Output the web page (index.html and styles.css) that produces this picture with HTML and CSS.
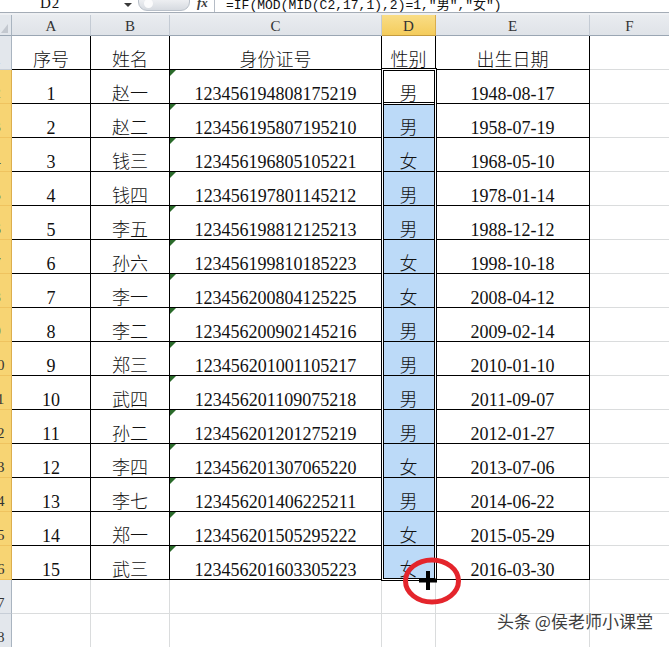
FILE: index.html
```html
<!DOCTYPE html>
<html lang="zh-CN">
<head>
<meta charset="utf-8">
<title>身份证号提取性别</title>
<link rel="stylesheet" href="styles.css">
</head>
<body>
<div class="app">
  <div class="fbar">
    <div class="namebox"><span class="ref">D2</span></div>
    <div class="drop"></div>
    <div class="pill"></div>
    <div class="fx">fx</div>
    <div class="formula">=IF(MOD(MID(C2,17,1),2)=1,"男","女")</div>
  </div>
  <div class="gap"></div>
  <div class="sheet">
    <div class="corner"></div>
    <div class="ch">A</div>
    <div class="ch">B</div>
    <div class="ch">C</div>
    <div class="ch sel">D</div>
    <div class="ch">E</div>
    <div class="ch">F</div>

    <div class="rh"><span>1</span></div>
    <div class="c t">序号</div><div class="c t">姓名</div><div class="c t">身份证号</div><div class="c t">性别</div><div class="c t">出生日期</div><div class="c"></div>

    <div class="rh sel"><span>2</span></div>
    <div class="c t">1</div><div class="c t">赵一</div><div class="c t id">123456194808175219</div><div class="c t act">男</div><div class="c t">1948-08-17</div><div class="c"></div>

    <div class="rh sel"><span>3</span></div>
    <div class="c t">2</div><div class="c t">赵二</div><div class="c t id">123456195807195210</div><div class="c t blue first">男</div><div class="c t">1958-07-19</div><div class="c"></div>

    <div class="rh sel"><span>4</span></div>
    <div class="c t">3</div><div class="c t">钱三</div><div class="c t id">123456196805105221</div><div class="c t blue">女</div><div class="c t">1968-05-10</div><div class="c"></div>

    <div class="rh sel"><span>5</span></div>
    <div class="c t">4</div><div class="c t">钱四</div><div class="c t id">123456197801145212</div><div class="c t blue">男</div><div class="c t">1978-01-14</div><div class="c"></div>

    <div class="rh sel"><span>6</span></div>
    <div class="c t">5</div><div class="c t">李五</div><div class="c t id">123456198812125213</div><div class="c t blue">男</div><div class="c t">1988-12-12</div><div class="c"></div>

    <div class="rh sel"><span>7</span></div>
    <div class="c t">6</div><div class="c t">孙六</div><div class="c t id">123456199810185223</div><div class="c t blue">女</div><div class="c t">1998-10-18</div><div class="c"></div>

    <div class="rh sel"><span>8</span></div>
    <div class="c t">7</div><div class="c t">李一</div><div class="c t id">123456200804125225</div><div class="c t blue">女</div><div class="c t">2008-04-12</div><div class="c"></div>

    <div class="rh sel"><span>9</span></div>
    <div class="c t">8</div><div class="c t">李二</div><div class="c t id">123456200902145216</div><div class="c t blue">男</div><div class="c t">2009-02-14</div><div class="c"></div>

    <div class="rh sel"><span>10</span></div>
    <div class="c t">9</div><div class="c t">郑三</div><div class="c t id">123456201001105217</div><div class="c t blue">男</div><div class="c t">2010-01-10</div><div class="c"></div>

    <div class="rh sel"><span>11</span></div>
    <div class="c t">10</div><div class="c t">武四</div><div class="c t id">123456201109075218</div><div class="c t blue">男</div><div class="c t">2011-09-07</div><div class="c"></div>

    <div class="rh sel"><span>12</span></div>
    <div class="c t">11</div><div class="c t">孙二</div><div class="c t id">123456201201275219</div><div class="c t blue">男</div><div class="c t">2012-01-27</div><div class="c"></div>

    <div class="rh sel"><span>13</span></div>
    <div class="c t">12</div><div class="c t">李四</div><div class="c t id">123456201307065220</div><div class="c t blue">女</div><div class="c t">2013-07-06</div><div class="c"></div>

    <div class="rh sel"><span>14</span></div>
    <div class="c t">13</div><div class="c t">李七</div><div class="c t id">123456201406225211</div><div class="c t blue">男</div><div class="c t">2014-06-22</div><div class="c"></div>

    <div class="rh sel"><span>15</span></div>
    <div class="c t">14</div><div class="c t">郑一</div><div class="c t id">123456201505295222</div><div class="c t blue">女</div><div class="c t">2015-05-29</div><div class="c"></div>

    <div class="rh sel"><span>16</span></div>
    <div class="c t">15</div><div class="c t">武三</div><div class="c t id">123456201603305223</div><div class="c t blue">女</div><div class="c t">2016-03-30</div><div class="c"></div>

    <div class="rh"><span>17</span></div>
    <div class="c"></div><div class="c"></div><div class="c"></div><div class="c"></div><div class="c"></div><div class="c"></div>

    <div class="rh"><span>18</span></div>
    <div class="c"></div><div class="c"></div><div class="c"></div><div class="c"></div><div class="c"></div><div class="c"></div>
  </div>

  <div class="selection"></div>
  <svg class="mark" width="80" height="64" viewBox="0 0 80 64">
    <ellipse cx="37" cy="32" rx="26.5" ry="21" fill="none" stroke="#e4252c" stroke-width="5"/>
    <rect x="31" y="22" width="4" height="19" fill="#000"/>
    <rect x="24" y="29.5" width="18" height="4" fill="#000"/>
  </svg>
  <div class="watermark">头条 @侯老师小课堂</div>
</div>
</body>
</html>
```
FILE: styles.css
```css
html, body {
  margin: 0;
  padding: 0;
  background: #fff;
}
body {
  width: 669px;
  height: 647px;
  overflow: hidden;
  font-family: "Liberation Serif", "Noto Sans CJK SC", serif;
}
.app {
  position: relative;
  width: 669px;
  height: 647px;
  overflow: hidden;
}

/* formula bar */
.fbar {
  height: 12px;
  border-bottom: 1px solid #a4acb6;
  display: flex;
  align-items: flex-start;
  overflow: hidden;
  background: #fff;
}
.namebox {
  flex: none;
  width: 121px;
  display: flex;
}
.ref {
  margin: -5px 0 0 40px;
  font: 15px/16px "Liberation Serif", serif;
  color: #111;
  letter-spacing: 1px;
}
.drop {
  flex: none;
  width: 0;
  height: 0;
  margin: 3px 0 0 3px;
  border-left: 4px solid transparent;
  border-right: 4px solid transparent;
  border-top: 4px solid #3a3a3a;
}
.pill {
  flex: none;
  box-sizing: border-box;
  width: 52px;
  height: 15px;
  margin: -4px 0 0 6px;
  border: 1px solid #b9c0c9;
  border-radius: 0 0 9px 9px;
  background: linear-gradient(#f4f5f7, #d6dae0);
  position: relative;
}
.pill::before {
  content: "";
  position: absolute;
  left: 5px;
  top: 2px;
  width: 9px;
  height: 9px;
  border-radius: 50%;
  background: #fbfbfc;
}
.fx {
  flex: none;
  box-sizing: border-box;
  width: 18px;
  height: 20px;
  margin: -5px 0 0 7px;
  border-right: 1px solid #b5bcc6;
  font: italic bold 13px/16px "Liberation Serif", serif;
  color: #3c3c3c;
}
.formula {
  margin: -2px 0 0 11px;
  font: 13px/16px "Liberation Mono", "Noto Sans CJK SC", monospace;
  color: #111;
  white-space: nowrap;
}
.gap {
  height: 2px;
  background: #eef0f3;
}

/* grid */
.sheet {
  display: grid;
  grid-template-columns: 12px 79px 79px 212px 54px 154px 80px;
  grid-template-rows: 21px repeat(18, 34px);
}
.sheet > div {
  box-sizing: border-box;
}
.corner {
  background: #e3e7ec;
  border-right: 1px solid #a9b4c0;
  border-bottom: 1px solid #9aa6b3;
  position: relative;
}
.corner::after {
  content: "";
  position: absolute;
  right: 3px;
  bottom: 2px;
  border-bottom: 9px solid #c3c8cf;
  border-left: 7px solid transparent;
}
.ch {
  background: linear-gradient(#e9ecf0, #dfe3e8);
  border-right: 1px solid #c4cbd4;
  border-bottom: 1px solid #9aa6b3;
  font: 15px/22px "Liberation Serif", serif;
  color: #333;
  text-align: center;
}
.ch.sel {
  background: linear-gradient(#f9dd86, #f4cc5c);
  border-right-color: #d9ad4c;
  border-bottom-color: #c49b3f;
}
.rh {
  background: #e3e7ec;
  border-right: 1px solid #a9b4c0;
  border-bottom: 1px solid #c7ced7;
  overflow: hidden;
  display: flex;
  justify-content: flex-end;
  align-items: flex-end;
}
.rh span {
  flex: none;
  width: 28px;
  text-align: center;
  font: 15px/18px "Liberation Serif", serif;
  color: #333;
  padding-bottom: 1px;
}
.rh.sel {
  background: #f7d473;
  border-right-color: #dcae4e;
  border-bottom-color: #efc35f;
}
.c {
  border-right: 1px solid #dadcdd;
  border-bottom: 1px solid #dadcdd;
  display: flex;
  align-items: flex-end;
  justify-content: center;
  font-size: 18px;
  font-weight: 300;
  line-height: 18px;
  padding-bottom: 0;
  color: #111;
  position: relative;
  white-space: nowrap;
}
.c.t {
  border-color: #000;
}
.blue {
  background: #bcdaf8;
}
.act {
  box-shadow: inset 0 -1px 0 #000;
}
.c.t.act {
  border-bottom-color: #fff;
}
.first {
  box-shadow: inset 0 1px 0 #000;
}
.id::before {
  content: "";
  position: absolute;
  left: 0;
  top: 0;
  border-top: 6px solid #2b6b2b;
  border-right: 6px solid transparent;
}

/* overlays */
.selection {
  position: absolute;
  left: 381px;
  top: 68px;
  width: 56px;
  height: 513px;
  box-sizing: border-box;
  border: 1px solid #000;
  box-shadow: inset 0 0 0 1px #fff, inset 0 0 0 2px #000;
  pointer-events: none;
}
.mark {
  position: absolute;
  left: 395px;
  top: 549px;
}
.watermark {
  position: absolute;
  left: 497px;
  top: 611px;
  font: 17px/20px "Noto Sans CJK SC", sans-serif;
  color: #3e3e3e;
  text-shadow: 0 0 2px #fff, 0 0 2px #fff;
  white-space: nowrap;
}
```
